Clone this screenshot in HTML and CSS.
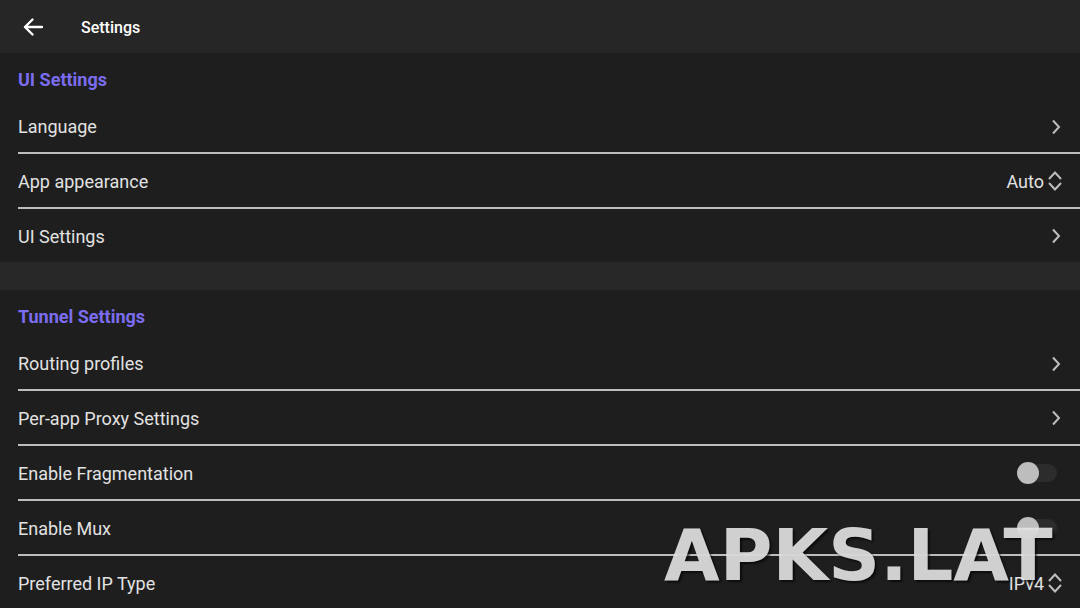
FILE: index.html
```html
<!DOCTYPE html>
<html lang="en">
<head>
    <meta charset="UTF-8">
    <meta name="viewport" content="width=device-width, initial-scale=1.0">
    <title>Settings</title>
    <link rel="stylesheet" href="styles.css">
</head>
<body>
    <header class="top-bar">
        <svg class="back" width="20" height="18" viewBox="0 0 20 18">
            <path d="M19 9H2M9.5 1.5L2 9l7.5 7.5" fill="none" stroke="#fff" stroke-width="2.4" stroke-linecap="round" stroke-linejoin="round"/>
        </svg>
        <h1 class="title">Settings</h1>
    </header>

    <section class="group">
        <h2 class="group-title">UI Settings</h2>
        <div class="row">
            <span class="label">Language</span>
            <svg class="chevron" width="10" height="16" viewBox="0 0 10 16"><path d="M2 1.5L8 8l-6 6.5" fill="none" stroke="#bdbdbd" stroke-width="2"/></svg>
        </div>
        <div class="row">
            <span class="label">App appearance</span>
            <span class="value">Auto</span>
            <svg class="updown" width="16" height="24" viewBox="0 0 16 24"><path d="M2 10l6-6.5 6 6.5M2 14l6 6.5 6-6.5" fill="none" stroke="#bdbdbd" stroke-width="2"/></svg>
        </div>
        <div class="row">
            <span class="label">UI Settings</span>
            <svg class="chevron" width="10" height="16" viewBox="0 0 10 16"><path d="M2 1.5L8 8l-6 6.5" fill="none" stroke="#bdbdbd" stroke-width="2"/></svg>
        </div>
    </section>

    <div class="spacer"></div>

    <section class="group">
        <h2 class="group-title">Tunnel Settings</h2>
        <div class="row">
            <span class="label">Routing profiles</span>
            <svg class="chevron" width="10" height="16" viewBox="0 0 10 16"><path d="M2 1.5L8 8l-6 6.5" fill="none" stroke="#bdbdbd" stroke-width="2"/></svg>
        </div>
        <div class="row">
            <span class="label">Per-app Proxy Settings</span>
            <svg class="chevron" width="10" height="16" viewBox="0 0 10 16"><path d="M2 1.5L8 8l-6 6.5" fill="none" stroke="#bdbdbd" stroke-width="2"/></svg>
        </div>
        <div class="row">
            <span class="label">Enable Fragmentation</span>
            <span class="switch"><span class="thumb"></span></span>
        </div>
        <div class="row">
            <span class="label">Enable Mux</span>
            <span class="switch"><span class="thumb"></span></span>
        </div>
        <div class="row">
            <span class="label">Preferred IP Type</span>
            <span class="value">IPv4</span>
            <svg class="updown" width="16" height="24" viewBox="0 0 16 24"><path d="M2 10l6-6.5 6 6.5M2 14l6 6.5 6-6.5" fill="none" stroke="#bdbdbd" stroke-width="2"/></svg>
        </div>
    </section>

    <div class="watermark">APKS.LAT</div>
</body>
</html>
```

FILE: styles.css
```css
* {
    margin: 0;
    padding: 0;
    box-sizing: border-box;
}

html, body {
    height: 100%;
    overflow: hidden;
}

body {
    background-color: #1e1e1e;
    color: #e2e2e2;
    font-family: Roboto, "Noto Sans", sans-serif;
    position: relative;
}

.top-bar {
    height: 53px;
    background-color: #262626;
    display: flex;
    align-items: center;
    padding-left: 23px;
    padding-top: 1px;
}

.back {
    display: block;
    margin-top: -1px;
}

.title {
    margin-left: 38px;
    font-size: 16px;
    font-weight: 500;
    color: #fff;
}

.group {
    padding-left: 18px;
    background-color: #1e1e1e;
}

.group-title {
    height: 46px;
    padding-top: 16px;
    font-size: 18px;
    font-weight: 700;
    color: #7b6cf0;
    line-height: 22px;
}

.row {
    height: 55px;
    display: flex;
    align-items: center;
    padding-right: 18px;
    padding-top: 1px;
    border-top: 2px solid #bdbdbd;
    font-size: 18px;
}

.group-title + .row {
    border-top: none;
    height: 53px;
    padding-top: 2px;
}

.label {
    flex: 1;
}

.value {
    color: #e2e2e2;
    margin-right: 3px;
}

.chevron {
    display: block;
    margin-right: 1px;
}

.updown {
    display: block;
    margin-right: -1px;
}

.spacer {
    height: 28px;
    background-color: #282828;
}

.switch {
    position: relative;
    width: 32px;
    height: 18px;
    border-radius: 9px;
    background-color: #2c2c2c;
    margin-right: 5px;
}

.thumb {
    position: absolute;
    left: -8px;
    top: -2px;
    width: 22px;
    height: 22px;
    border-radius: 50%;
    background-color: #bdbdbd;
}

.watermark {
    position: absolute;
    left: 664px;
    top: 519px;
    font-family: "DejaVu Sans", sans-serif;
    font-weight: 700;
    font-size: 72px;
    line-height: 72px;
    color: rgba(230, 230, 230, 0.9);
    text-shadow: 2px 2px 2px rgba(0, 0, 0, 0.6);
}
```
